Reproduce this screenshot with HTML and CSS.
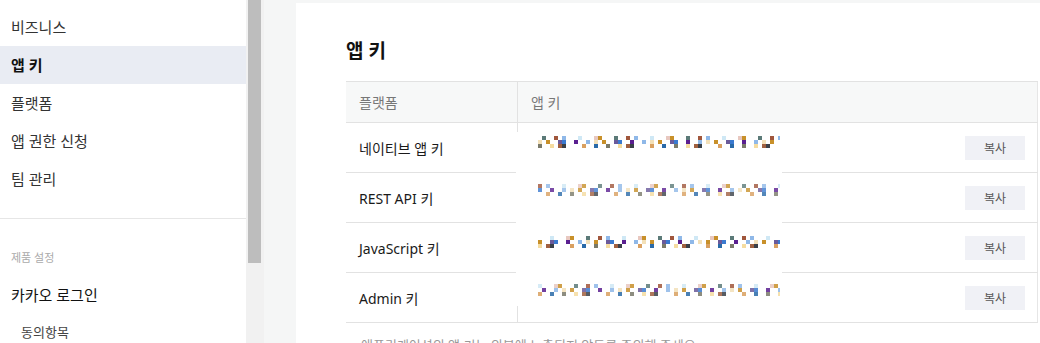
FILE: index.html
```html
<!DOCTYPE html>
<html lang="ko">
<head>
  <meta charset="UTF-8">
  <title>앱 키</title>
  <link rel="stylesheet" href="styles.css">
</head>
<body>

  <div class="layout">
    <nav class="sidebar">
      <ul class="menu">
        <li class="menu-item">비즈니스</li>
        <li class="menu-item active">앱 키</li>
        <li class="menu-item">플랫폼</li>
        <li class="menu-item">앱 권한 신청</li>
        <li class="menu-item">팀 관리</li>
      </ul>
      <div class="menu-title">제품 설정</div>
      <ul class="menu">
        <li class="menu-item product">카카오 로그인</li>
        <li class="menu-item sub">동의항목</li>
      </ul>
    </nav>

    <div class="scrollbar"><div class="thumb"></div></div>

    <main class="main">
      <section class="card">
        <h2 class="title">앱 키</h2>

        <div class="table-wrap">
          <table class="key-table">
            <thead>
              <tr>
                <th class="col-platform">플랫폼</th>
                <th>앱 키</th>
              </tr>
            </thead>
            <tbody>
              <tr>
                <td class="col-platform">네이티브 앱 키</td>
                <td class="key-cell"><button class="btn-copy">복사</button></td>
              </tr>
              <tr>
                <td class="col-platform">REST API 키</td>
                <td class="key-cell"><button class="btn-copy">복사</button></td>
              </tr>
              <tr>
                <td class="col-platform">JavaScript 키</td>
                <td class="key-cell"><button class="btn-copy">복사</button></td>
              </tr>
              <tr>
                <td class="col-platform">Admin 키</td>
                <td class="key-cell"><button class="btn-copy">복사</button></td>
              </tr>
            </tbody>
          </table>

          <!-- 키 값 가림 -->
          <div class="redact">
            <div class="mosaic m1"></div>
            <div class="mosaic m2"></div>
            <div class="mosaic m3"></div>
            <div class="mosaic m4"></div>
          </div>
        </div>

        <p class="notice">애플리케이션의 앱 키는 외부에 노출되지 않도록 주의해 주세요.</p>
      </section>
    </main>
  </div>

</body>
</html>
```

FILE: styles.css
```css
body {
  margin: 0;
  height: 343px;
  overflow: hidden;
  font-family: "Noto Sans", "Noto Sans CJK KR", sans-serif;
  color: #222;
  background: #f5f6f6;
}

.layout {
  display: flex;
  height: 343px;
}

/* 사이드바 */
.sidebar {
  width: 246px;
  flex-shrink: 0;
  background: #fff;
  padding-top: 8px;
}

.menu {
  list-style: none;
  margin: 0;
  padding: 0;
}

.menu:first-child {
  padding-bottom: 20px;
  border-bottom: 1px solid #e6e6e6;
}

.menu-item {
  height: 38px;
  line-height: 38px;
  padding-left: 11px;
  font-size: 15px;
  color: #333;
}

.menu-item.active {
  background: #e9ecf3;
  color: #111;
  font-weight: 700;
}

.menu-title {
  margin-top: 28px;
  height: 22px;
  line-height: 22px;
  padding-left: 11px;
  font-size: 11px;
  color: #aaa;
}

.menu-item.product {
  margin-top: 7px;
  color: #111;
}

.menu-item.sub {
  height: 36px;
  line-height: 36px;
  padding-left: 21px;
  font-size: 13px;
  color: #444;
}

/* 스크롤바 */
.scrollbar {
  width: 18px;
  flex-shrink: 0;
  background: #f1f1f1;
}

.thumb {
  width: 13px;
  height: 263px;
  margin-left: 2px;
  background: #bdbdbd;
}

/* 본문 */
.main {
  flex: 1;
  padding: 3px 0 0 32px;
  overflow: hidden;
}

.card {
  background: #fff;
  height: 100%;
  padding: 34px 0 0 50px;
  width: 760px;
}

.title {
  margin: 0 0 16px;
  font-size: 19px;
  font-weight: 700;
  line-height: 28px;
  color: #111;
}

.table-wrap {
  position: relative;
  width: 692px;
}

.key-table {
  width: 692px;
  border-collapse: collapse;
  font-size: 14px;
  border-right: 1px solid #e6e6e6;
}

.key-table th {
  height: 40px;
  padding: 0 0 0 13px;
  text-align: left;
  font-weight: 400;
  color: #777;
  background: #f7f8f8;
  border-top: 1px solid #e2e2e2;
  border-bottom: 1px solid #e2e2e2;
}

.key-table th.col-platform {
  border-right: 1px solid #e2e2e2;
}

.key-table td {
  height: 49px;
  padding: 0 0 0 13px;
  border-bottom: 1px solid #e2e2e2;
  color: #1a1a1a;
}

.key-table td.col-platform {
  width: 158px;
  border-right: 1px solid #e2e2e2;
}

.key-cell {
  text-align: right;
  padding-right: 12px !important;
}

.btn-copy {
  width: 60px;
  height: 24px;
  border: none;
  background: #f0f1f6;
  color: #555;
  font-family: inherit;
  font-size: 12px;
  cursor: pointer;
  vertical-align: middle;
}

/* 가림 처리 */
.redact {
  position: absolute;
  left: 170px;
  top: 51px;
  width: 266px;
  height: 174px;
  background: #fff;
}

.mosaic {
  position: absolute;
  left: 22px;
  width: 242px;
  height: 12px;
  background-image:
    linear-gradient(90deg, #fff 0 4px, #5b7a78 4px 8px, #fff 8px 16px, #a0563c 16px 20px, #fff 20px 24px, #8fb8e8 24px 28px, #fff 28px 40px, #cfe8f5 40px 44px, #fff 44px 56px, #e8c8c0 56px 60px, #c8902a 60px 64px, #fff 64px 72px),
    linear-gradient(90deg, #f3e0b8 0 4px, #fff 4px 8px, #c8902a 8px 12px, #fff 12px 20px, #6a5a9a 20px 24px, #3a7ad0 24px 28px, #fff 28px 36px, #5a1f90 36px 40px, #fff 40px 48px, #8fb8e8 48px 52px, #fff 52px 56px),
    linear-gradient(90deg, #7a7a6a 0 4px, #fff 4px 12px, #f5dca0 12px 16px, #fff 16px 20px, #a06040 20px 24px, #3a4048 24px 28px, #fff 28px 36px, #2e3a48 32px 36px, #fff 36px 44px, #d9a060 44px 48px, #fff 48px 56px, #2a6aa8 56px 60px, #fff 60px 68px);
  background-size: 72px 4px, 56px 4px, 68px 4px;
  background-position: 0 0, 0 4px, 0 8px;
  background-repeat: repeat-x;
}

.m1 { top: 4px; }
.m2 { top: 52px; background-position: -16px 0, -24px 4px, -36px 8px; opacity: 0.8; }
.m3 { top: 104px; background-position: -28px 0, -8px 4px, -12px 8px; }
.m4 { top: 152px; height: 16px; background-position: -40px 0, -32px 4px, -44px 8px; opacity: 0.85; }

.notice {
  margin: 12px 0 0 15px;
  font-size: 13px;
  color: #999;
}
```
